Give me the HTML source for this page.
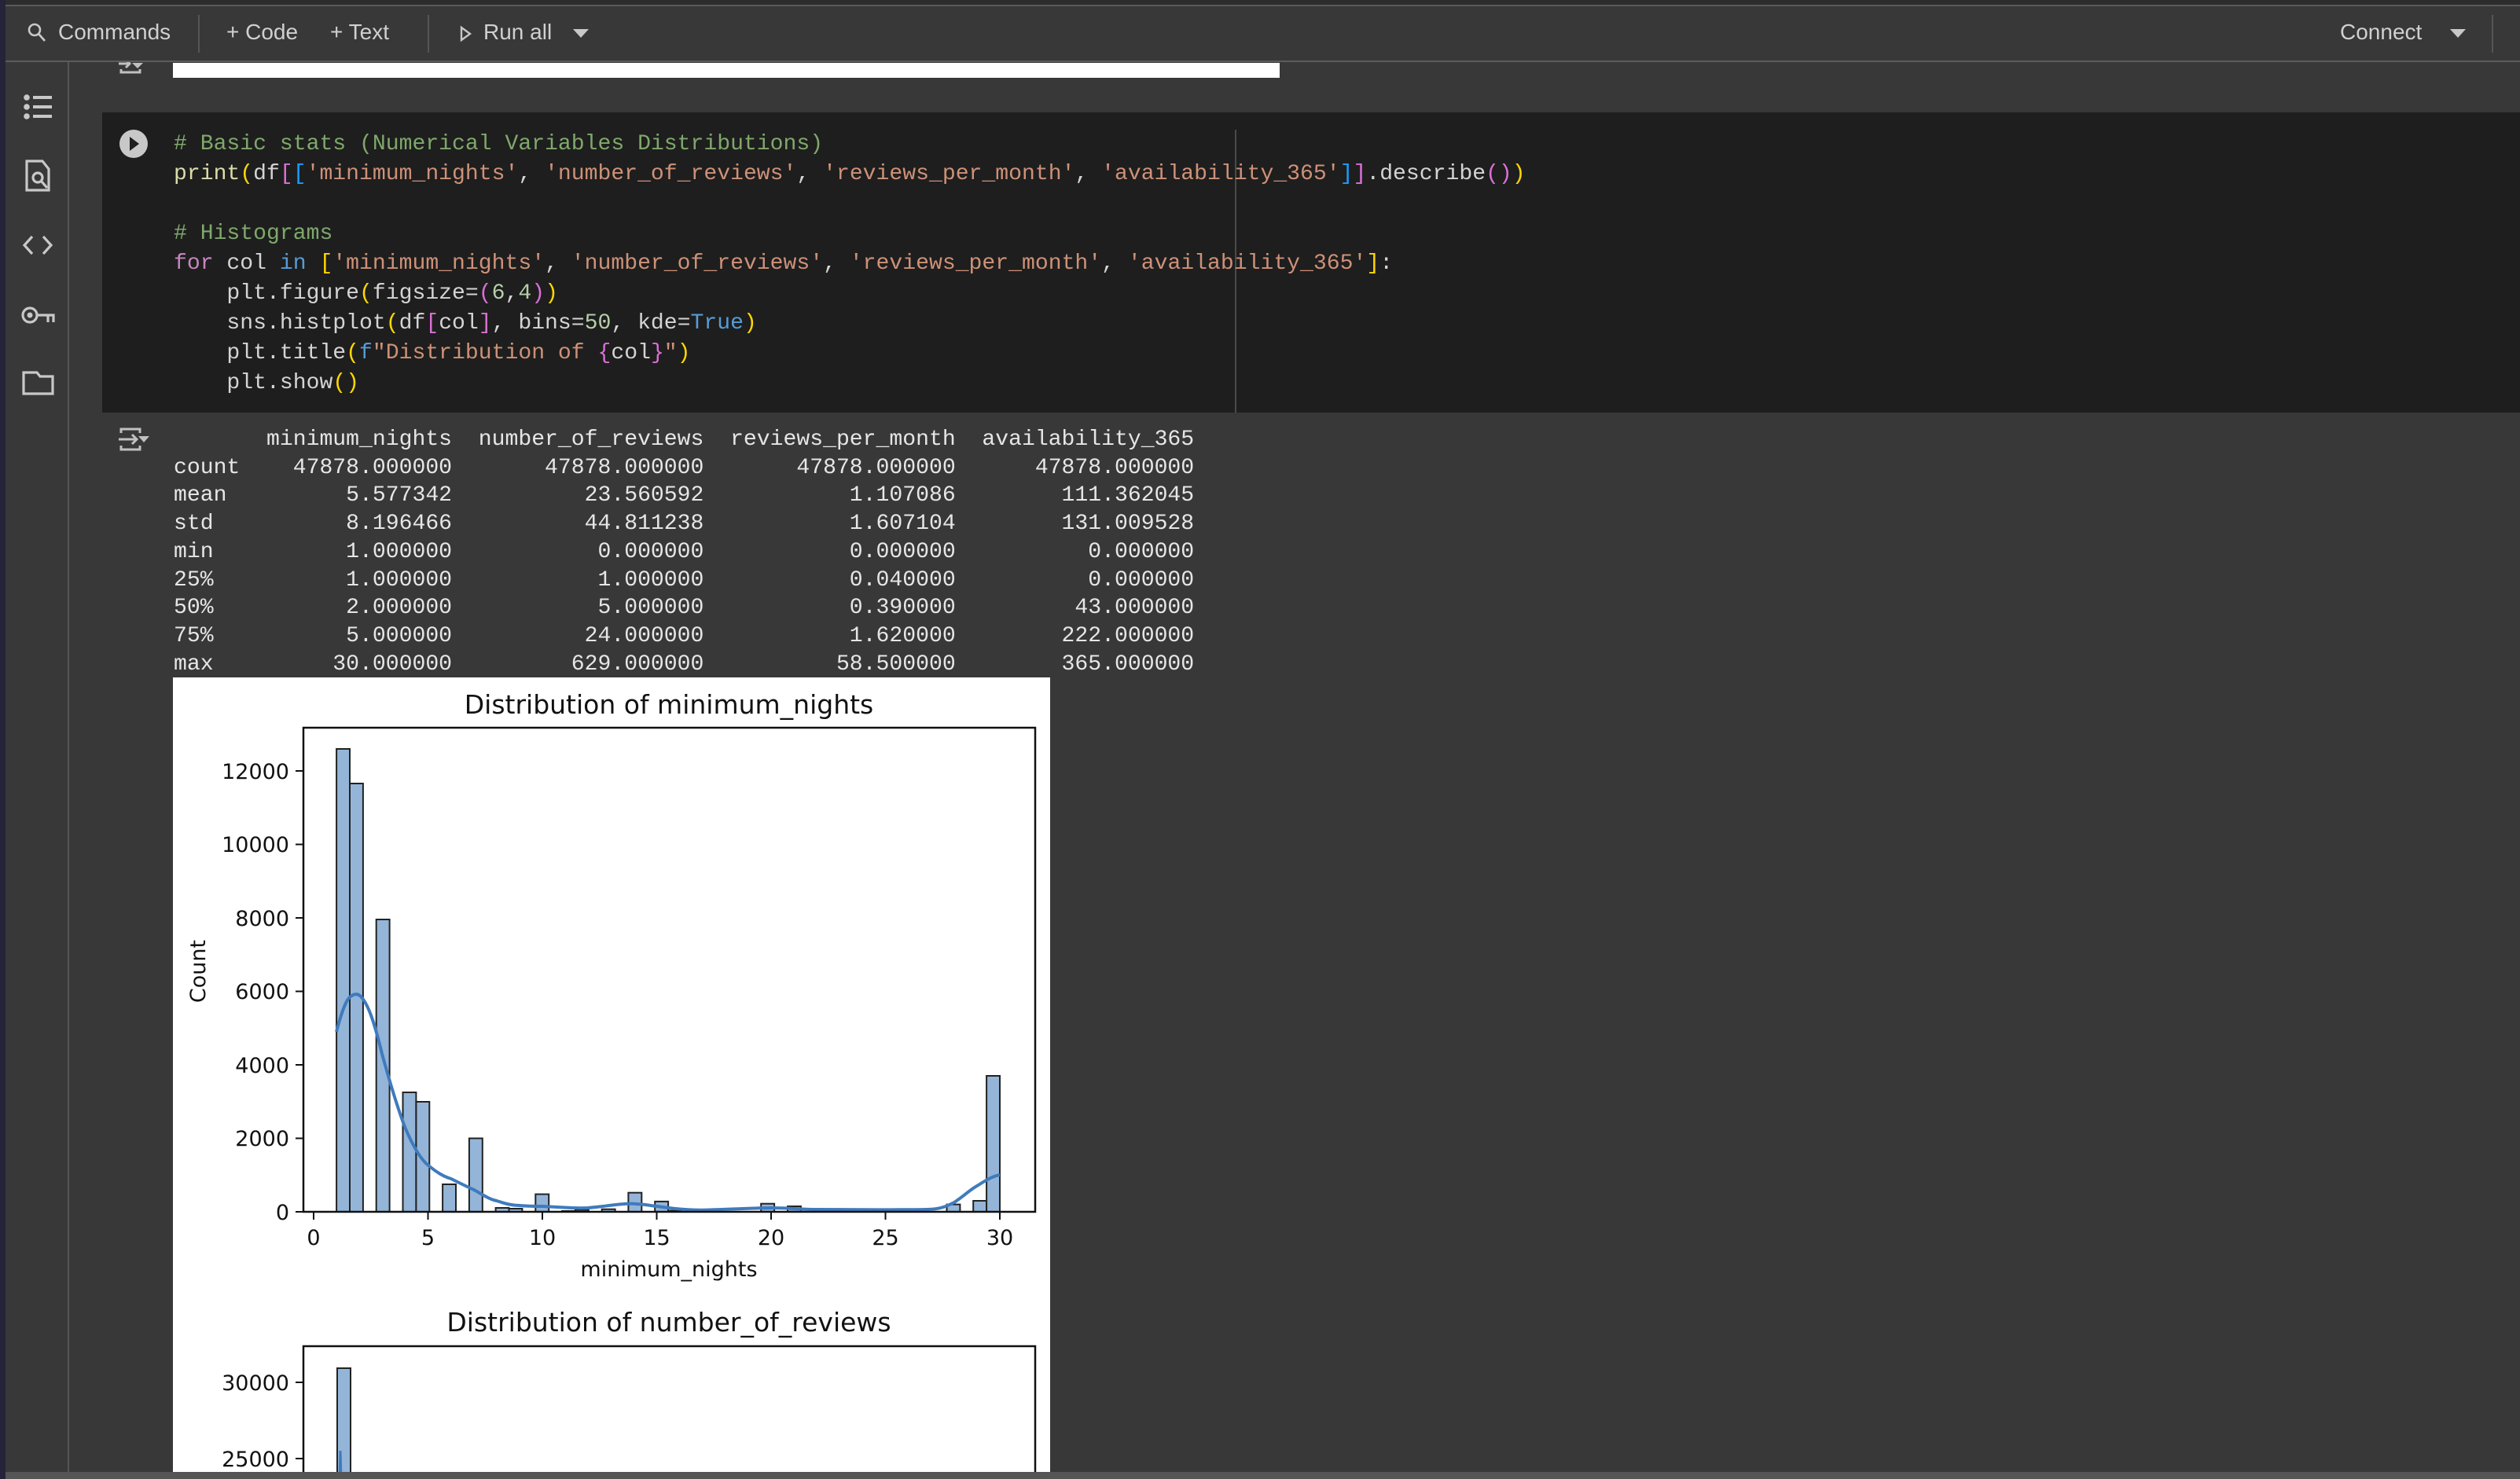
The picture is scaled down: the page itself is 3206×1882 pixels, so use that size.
<!DOCTYPE html>
<html><head><meta charset="utf-8">
<style>
*{margin:0;padding:0;box-sizing:border-box}
body{width:3206px;height:1882px;background:#383838;position:relative;overflow:hidden;font-family:"Liberation Sans",sans-serif}
.abs{position:absolute}
.tb{color:#d0d0d0;font-size:28px;line-height:28px;white-space:nowrap}
pre{font-family:"Liberation Mono","DejaVu Sans Mono",monospace;font-size:28.1px;margin:0}
.code{left:221px;top:165px;line-height:38px;color:#d4d4d4}
.out{left:221px;top:542px;line-height:35.7px;color:#e6e6e6}
.c{color:#7fa86b}.s{color:#ce9178}.k{color:#c586c0}.b{color:#569cd6}.y{color:#ffd700}.p{color:#da70d6}.bl{color:#179fff}.n{color:#b5cea8}.f{color:#dcdcaa}
</style></head><body>
<div class="abs" style="left:0;top:0;width:7px;height:1882px;background:#24233a"></div>
<div class="abs" style="left:7px;top:0;width:3199px;height:78px;background:#383838;border-top:6px solid #2c2c2c"></div>
<div class="abs" style="left:7px;top:6px;width:3199px;height:2px;background:#5a5a5a"></div>
<div class="abs" style="left:7px;top:77px;width:3199px;height:2px;background:#5c5c5c"></div>
<svg class="abs" style="left:34px;top:28px" width="26" height="26" viewBox="0 0 26 26"><circle cx="10" cy="10" r="7" fill="none" stroke="#c8c8c8" stroke-width="2.6"/><path d="M15 15 L23 24" stroke="#c8c8c8" stroke-width="2.8"/></svg>
<div class="abs tb" style="left:74px;top:27px">Commands</div>
<div class="abs" style="left:252px;top:19px;width:2px;height:48px;background:#555"></div>
<div class="abs tb" style="left:288px;top:27px">+ Code</div>
<div class="abs tb" style="left:420px;top:27px">+ Text</div>
<div class="abs" style="left:544px;top:19px;width:2px;height:48px;background:#555"></div>
<svg class="abs" style="left:584px;top:32px" width="18" height="22"><path d="M3 3 L14 11 L3 19 Z" fill="none" stroke="#c8c8c8" stroke-width="2.4"/></svg>
<div class="abs tb" style="left:615px;top:27px">Run all</div>
<svg class="abs" style="left:728px;top:36px" width="22" height="14"><path d="M1 1 H21 L11 12 Z" fill="#c8c8c8"/></svg>
<div class="abs tb" style="left:2977px;top:27px">Connect</div>
<svg class="abs" style="left:3116px;top:36px" width="22" height="14"><path d="M1 1 H21 L11 12 Z" fill="#c8c8c8"/></svg>
<div class="abs" style="left:3170px;top:19px;width:2px;height:48px;background:#555"></div>
<div class="abs" style="left:86px;top:79px;width:2px;height:1795px;background:#555"></div>
<svg class="abs" style="left:0;top:79px" width="88" height="460">
 <g fill="#c8c8c8"><circle cx="34" cy="45" r="3.8"/><circle cx="34" cy="57" r="3.8"/><circle cx="34" cy="69" r="3.8"/>
 <rect x="42" y="43" width="24" height="4"/><rect x="42" y="55" width="24" height="4"/><rect x="42" y="67" width="24" height="4"/></g>
 <g fill="none" stroke="#c8c8c8" stroke-width="3.2">
 <path d="M34 126 H54 L62 136 V163 H34 Z"/><circle cx="48" cy="147" r="6"/><path d="M52 151 L60 160"/>
 <path d="M41 222 L31 233 L41 244 M55 222 L65 233 L55 244"/>
 <circle cx="38" cy="322" r="9"/><path d="M47 322 H68 V331 M61 322 V331"/>
 <path d="M30 395 H47 L51 400 H67 V422 H30 Z"/>
 </g><circle cx="38" cy="322" r="3.5" fill="#c8c8c8"/>
</svg>
<div class="abs" style="left:220px;top:80px;width:1408px;height:19px;background:#fff"></div>
<svg class="abs" style="left:148px;top:79px" width="50" height="22"><g fill="none" stroke="#c0c0c0" stroke-width="3"><path d="M3 2 H17 M12 -3 L17 2 L12 7"/><path d="M6 9 V13 H30 V9"/></g><path d="M20 1 H34 L27 8Z" fill="#c0c0c0"/></svg>
<div class="abs" style="left:130px;top:143px;width:3076px;height:382px;background:#1e1e1e"></div>
<div class="abs" style="left:1571px;top:165px;width:2px;height:360px;background:#4a4a4a"></div>
<svg class="abs" style="left:150px;top:163px" width="40" height="40"><circle cx="20" cy="20" r="18" fill="#c8c8c8"/><path d="M15 11 L27 20 L15 29Z" fill="#1e1e1e"/></svg>
<pre class="abs code"><span class="c"># Basic stats (Numerical Variables Distributions)</span>
<span class="f">print</span><span class="y">(</span>df<span class="p">[</span><span class="bl">[</span><span class="s">'minimum_nights'</span>, <span class="s">'number_of_reviews'</span>, <span class="s">'reviews_per_month'</span>, <span class="s">'availability_365'</span><span class="bl">]</span><span class="p">]</span>.describe<span class="p">()</span><span class="y">)</span>

<span class="c"># Histograms</span>
<span class="k">for</span> col <span class="b">in</span> <span class="y">[</span><span class="s">'minimum_nights'</span>, <span class="s">'number_of_reviews'</span>, <span class="s">'reviews_per_month'</span>, <span class="s">'availability_365'</span><span class="y">]</span>:
    plt.figure<span class="y">(</span>figsize=<span class="p">(</span><span class="n">6</span>,<span class="n">4</span><span class="p">)</span><span class="y">)</span>
    sns.histplot<span class="y">(</span>df<span class="p">[</span>col<span class="p">]</span>, bins=<span class="n">50</span>, kde=<span class="b">True</span><span class="y">)</span>
    plt.title<span class="y">(</span><span class="b">f</span><span class="s">"Distribution of </span><span class="p">{</span>col<span class="p">}</span><span class="s">"</span><span class="y">)</span>
    plt.show<span class="y">()</span></pre>
<svg class="abs" style="left:148px;top:542px" width="50" height="34"><g fill="none" stroke="#c0c0c0" stroke-width="3"><path d="M6 9 V4 H30 V9 M6 25 V30 H30 V25"/><path d="M3 17 H25 M20 11 L26 17 L20 23"/></g><path d="M28 13 H42 L35 21Z" fill="#c0c0c0"/></svg>
<pre class="abs out">       minimum_nights  number_of_reviews  reviews_per_month  availability_365
count    47878.000000       47878.000000       47878.000000      47878.000000
mean         5.577342          23.560592           1.107086        111.362045
std          8.196466          44.811238           1.607104        131.009528
min          1.000000           0.000000           0.000000          0.000000
25%          1.000000           1.000000           0.040000          0.000000
50%          2.000000           5.000000           0.390000         43.000000
75%          5.000000          24.000000           1.620000        222.000000
max         30.000000         629.000000          58.500000        365.000000</pre>
<svg class="abs" style="left:0;top:0" width="3206" height="1882" font-family="DejaVu Sans, Liberation Sans, sans-serif">
 <rect x="220" y="862" width="1116" height="1012" fill="#fff"/>
 <text x="851" y="908" font-size="33" text-anchor="middle" fill="#111">Distribution of minimum_nights</text>
 <g fill="#94b5d8" stroke="#222" stroke-width="2">
  <rect x="428.1" y="953" width="16.9" height="589"/>
  <rect x="445" y="997" width="16.9" height="545"/>
  <rect x="478.7" y="1170" width="16.9" height="372"/>
  <rect x="512.5" y="1390" width="16.9" height="152"/>
  <rect x="529.4" y="1402" width="16.9" height="140"/>
  <rect x="563.1" y="1507" width="16.9" height="35"/>
  <rect x="596.9" y="1448.5" width="16.9" height="93.5"/>
  <rect x="630.6" y="1537" width="16.9" height="5"/>
  <rect x="647.5" y="1538" width="16.9" height="4"/>
  <rect x="681.3" y="1519.6" width="16.9" height="22.4"/>
  <rect x="715" y="1541" width="16.9" height="1"/>
  <rect x="731.9" y="1539.7" width="16.9" height="2.3"/>
  <rect x="765.7" y="1538.7" width="16.9" height="3.3"/>
  <rect x="799.4" y="1517.7" width="16.9" height="24.3"/>
  <rect x="833.2" y="1528.9" width="16.9" height="13.1"/>
  <rect x="850.1" y="1540.6" width="16.9" height="1.4"/>
  <rect x="968.2" y="1531.7" width="16.9" height="10.3"/>
  <rect x="1002" y="1535" width="16.9" height="7"/>
  <rect x="1204.5" y="1532.6" width="16.9" height="9.4"/>
  <rect x="1238.2" y="1528" width="16.9" height="14"/>
  <rect x="1255.1" y="1369" width="16.9" height="173"/>
 </g>
 <path d="M428 1313 C434 1290,440 1272,446 1268 C450 1265,454 1264,458 1267 C468 1276,476 1300,486 1341 C494 1370,504 1405,515 1434 C526 1460,536 1476,545 1483 C556 1492,564 1497,574 1500 C586 1506,594 1510,603 1514 C614 1520,622 1526,632 1528 C644 1532,652 1534,661 1534 C672 1535,680 1535,690 1535 C716 1536,730 1538,748 1537 C772 1535,790 1531,806 1531.7 C818 1532,826 1534,836 1535 C856 1538,874 1540,894 1539.7 C930 1539,960 1537,981 1537 C1004 1537,1020 1539,1039 1539 C1100 1539,1160 1540,1185 1538.7 C1198 1538,1206 1534,1214 1530 C1226 1522,1234 1514,1243 1509 C1254 1502,1262 1497,1272 1495" fill="none" stroke="#3f7bbd" stroke-width="4"/>
 <rect x="386" y="926" width="931" height="616" fill="none" stroke="#111" stroke-width="2.5"/>
 <g stroke="#111" stroke-width="2">
  <path d="M376 1542 H386 M376 1448.5 H386 M376 1355 H386 M376 1261.5 H386 M376 1168 H386 M376 1074.5 H386 M376 981 H386"/>
  <path d="M399 1542 V1552 M544.5 1542 V1552 M690 1542 V1552 M835.5 1542 V1552 M981 1542 V1552 M1126.5 1542 V1552 M1272 1542 V1552"/>
 </g>
 <g font-size="27" fill="#111" text-anchor="end">
  <text x="368" y="1552">0</text><text x="368" y="1458">2000</text><text x="368" y="1365">4000</text><text x="368" y="1271">6000</text><text x="368" y="1178">8000</text><text x="368" y="1084">10000</text><text x="368" y="991">12000</text>
 </g>
 <g font-size="27" fill="#111" text-anchor="middle">
  <text x="399" y="1584">0</text><text x="544.5" y="1584">5</text><text x="690" y="1584">10</text><text x="835.5" y="1584">15</text><text x="981" y="1584">20</text><text x="1126.5" y="1584">25</text><text x="1272" y="1584">30</text>
  <text x="851" y="1624">minimum_nights</text>
 </g>
 <text x="0" y="0" font-size="27" fill="#111" text-anchor="middle" transform="translate(261 1236) rotate(-90)">Count</text>
 <text x="851" y="1694" font-size="33" text-anchor="middle" fill="#111">Distribution of number_of_reviews</text>
 <rect x="429" y="1741" width="17" height="140" fill="#94b5d8" stroke="#222" stroke-width="2"/>
 <path d="M432 1882 L433 1846 L434 1882" fill="none" stroke="#3f7bbd" stroke-width="3"/>
 <path d="M386 1882 V1713 H1317 V1882" fill="none" stroke="#111" stroke-width="2.5"/>
 <path d="M376 1759 H386 M376 1856 H386" stroke="#111" stroke-width="2"/>
 <g font-size="27" fill="#111" text-anchor="end"><text x="368" y="1769">30000</text><text x="368" y="1866">25000</text></g>
</svg>
<div class="abs" style="left:7px;top:1873px;width:3199px;height:9px;background:#555"></div>
</body></html>
